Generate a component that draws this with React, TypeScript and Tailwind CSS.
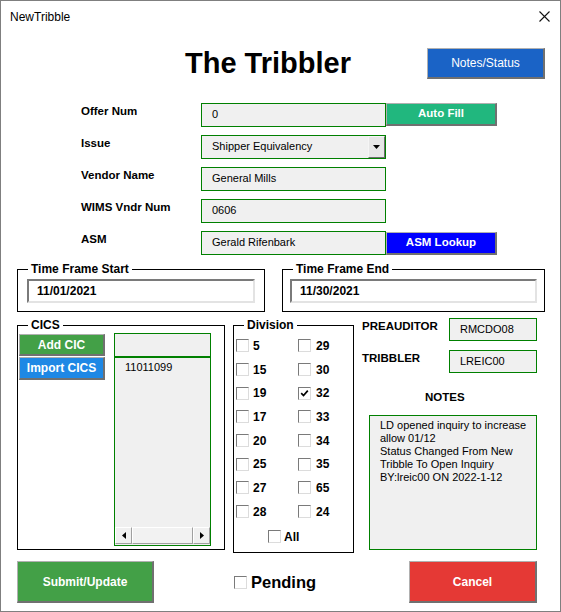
import React from "react";

const Box = ({ checked }: { checked?: boolean }) => (
  <span className="w-[13px] h-[13px] border border-t-[#7a7a7a] border-l-[#7a7a7a] border-r-[#dcdcdc] border-b-[#dcdcdc] bg-white flex items-center justify-center shrink-0">
    {checked && (
      <svg width="9" height="9" viewBox="0 0 9 9">
        <path d="M1.2 4.2 L3.5 6.6 L7.8 1.6" stroke="#000" strokeWidth="1.7" fill="none" />
      </svg>
    )}
  </span>
);

const GreenInput = ({ value, w = "w-[185px]", h = "h-[24px]" }: { value: string; w?: string; h?: string }) => (
  <div className={`${w} ${h} border border-[#008000] bg-[#f0f0f0] text-[11px] pl-[10px] pt-[3px] leading-[14px]`}>{value}</div>
);

const Row = ({ label, children }: { label: string; children: React.ReactNode }) => (
  <div className="flex h-[24px]">
    <div className="w-[120px] text-[11.5px] font-bold leading-[14px] pt-[1px]">{label}</div>
    {children}
  </div>
);

const btnBevel = "border border-[#b0b0b0] border-r-2 border-b-2 border-r-[#707070] border-b-[#707070]";

export default function App() {
  const left = ["5", "15", "19", "17", "20", "25", "27", "28"];
  const right = ["29", "30", "32", "33", "34", "35", "65", "24"];
  return (
    <div className="w-[561px] h-[612px] bg-white border border-[#7f7f7f] flex flex-col text-black font-['Liberation_Sans',Arial,sans-serif]">
      {/* title bar */}
      <div className="h-[31px] flex items-center justify-between pl-[9px] pr-[10px] shrink-0">
        <span className="text-[12px] leading-[14px]">NewTribble</span>
        <svg width="11" height="11" viewBox="0 0 11 11">
          <path d="M0.5 0.5 L10.5 10.5 M10.5 0.5 L0.5 10.5" stroke="#111" strokeWidth="1.1" />
        </svg>
      </div>

      {/* header */}
      <div className="h-[71px] flex items-start shrink-0">
        <div className="ml-[184px] mt-[15px] text-[29px] font-bold leading-[32px]">The Tribbler</div>
        <div className={`ml-auto mr-[15px] mt-[16px] w-[118px] h-[31px] bg-[#1a63c6] text-white text-[12px] flex items-center justify-center ${btnBevel}`}>
          Notes/Status
        </div>
      </div>

      {/* form rows */}
      <div className="pl-[80px] flex flex-col gap-[8px] shrink-0">
        <Row label="Offer Num">
          <GreenInput value="0" />
          <div className={`w-[111px] h-[23px] bg-[#21b77e] text-white text-[11.5px] font-bold flex items-center justify-center ${btnBevel}`}>Auto Fill</div>
        </Row>
        <Row label="Issue">
          <div className="w-[185px] h-[24px] border border-[#008000] bg-[#f0f0f0] flex">
            <div className="flex-1 text-[11px] pl-[10px] pt-[3px] leading-[14px]">Shipper Equivalency</div>
            <div className="w-[17px] h-[22px] bg-[#e6e6e6] border border-t-[#f5f5f5] border-l-[#f5f5f5] border-r-[#6b6b6b] border-b-[#6b6b6b] flex items-center justify-center">
              <svg width="7" height="4" viewBox="0 0 7 4"><path d="M0 0 H7 L3.5 4 Z" fill="#000" /></svg>
            </div>
          </div>
        </Row>
        <Row label="Vendor Name">
          <GreenInput value="General Mills" />
        </Row>
        <Row label="WIMS Vndr Num">
          <GreenInput value="0606" />
        </Row>
        <Row label="ASM">
          <GreenInput value="Gerald Rifenbark" />
          <div className={`w-[111px] h-[23px] mt-[1px] bg-[#0000ff] text-white text-[11.5px] font-bold flex items-center justify-center ${btnBevel}`}>ASM Lookup</div>
        </Row>
      </div>

      {/* time frames */}
      <div className="flex pl-[16px] mt-[7px] shrink-0">
        <fieldset className="w-[248px] h-[50px] border border-black px-[9px]">
          <legend className="ml-[1px] px-[3px] text-[12px] font-bold leading-[14px]">Time Frame Start</legend>
          <div className="mt-[3px] h-[24px] border-2 border-t-[#7a7a7a] border-l-[#7a7a7a] border-r-[#e3e3e3] border-b-[#e3e3e3] bg-white text-[12px] font-bold pl-[8px] leading-[20px]">11/01/2021</div>
        </fieldset>
        <fieldset className="ml-[17px] w-[263px] h-[50px] border border-black px-[7px]">
          <legend className="ml-[3px] px-[3px] text-[12px] font-bold leading-[14px]">Time Frame End</legend>
          <div className="mt-[3px] h-[24px] border-2 border-t-[#7a7a7a] border-l-[#7a7a7a] border-r-[#e3e3e3] border-b-[#e3e3e3] bg-white text-[12px] font-bold pl-[8px] leading-[20px]">11/30/2021</div>
        </fieldset>
      </div>

      {/* lower section */}
      <div className="flex pl-[16px] mt-[6px] shrink-0">
        <fieldset className="w-[208px] h-[232px] border border-black flex">
          <legend className="ml-[10px] px-[3px] text-[12px] font-bold leading-[14px]">CICS</legend>
          <div className="flex pl-[1px]">
            <div className="flex flex-col w-[86px] mt-[2px] gap-[1px]">
              <div className={`h-[22px] bg-[#43a047] text-white text-[12px] font-bold flex items-center justify-center ${btnBevel}`}>Add CIC</div>
              <div className={`h-[23px] bg-[#1e88e5] text-white text-[12px] font-bold flex items-center justify-center ${btnBevel}`}>Import CICS</div>
            </div>
            <div className="ml-[9px] mt-[1px] w-[97px] h-[213px] border border-[#008000] bg-[#f0f0f0] flex flex-col">
              <div className="h-[24px] border-b-2 border-[#008000] shrink-0" />
              <div className="flex-1 text-[11px] pl-[10px] pt-[2px] leading-[14px]">11011099</div>
              <div className="h-[17px] flex bg-[#f0f0f0] mb-[1px]">
                <div className="w-[17px] h-[17px] bg-[#f0f0f0] border border-t-[#fff] border-l-[#fff] border-r-[#a0a0a0] border-b-[#a0a0a0] flex items-center justify-center">
                  <svg width="4" height="7" viewBox="0 0 4 7"><path d="M4 0 V7 L0 3.5 Z" fill="#000" /></svg>
                </div>
                <div className="flex-1 border border-t-[#fff] border-l-[#fff] border-r-[#a0a0a0] border-b-[#a0a0a0] bg-[#f2f2f2]" />
                <div className="w-[17px] h-[17px] bg-[#f0f0f0] border border-t-[#fff] border-l-[#fff] border-r-[#a0a0a0] border-b-[#a0a0a0] flex items-center justify-center">
                  <svg width="4" height="7" viewBox="0 0 4 7"><path d="M0 0 V7 L4 3.5 Z" fill="#000" /></svg>
                </div>
              </div>
            </div>
          </div>
        </fieldset>

        <fieldset className="ml-[8px] w-[121px] h-[235px] border border-black">
          <legend className="ml-[10px] px-[3px] text-[12px] font-bold leading-[14px]">Division</legend>
          <div className="grid grid-cols-[62px_1fr] pl-[2px] mt-[2px]">
            {left.map((l, i) => (
              <React.Fragment key={l}>
                <div className="h-[23.7px] flex items-center">
                  <Box />
                  <span className="ml-[4px] text-[12px] font-bold">{l}</span>
                </div>
                <div className="h-[23.7px] flex items-center">
                  <Box checked={right[i] === "32"} />
                  <span className="ml-[5px] text-[12px] font-bold">{right[i]}</span>
                </div>
              </React.Fragment>
            ))}
          </div>
          <div className="h-[24px] mt-[1px] flex items-center pl-[34px]">
            <Box />
            <span className="ml-[3px] text-[12px] font-bold">All</span>
          </div>
        </fieldset>

        <div className="ml-[8px] flex flex-col">
          <div className="flex">
            <div className="w-[87px] text-[11.5px] font-bold leading-[14px] pt-[1px]">PREAUDITOR</div>
            <GreenInput value="RMCDO08" w="w-[88px]" h="h-[23px]" />
          </div>
          <div className="flex mt-[9px]">
            <div className="w-[87px] text-[11.5px] font-bold leading-[14px] pt-[1px]">TRIBBLER</div>
            <GreenInput value="LREIC00" w="w-[88px]" h="h-[23px]" />
          </div>
          <div className="ml-[63px] mt-[17px] text-[11.5px] font-bold leading-[14px]">NOTES</div>
          <div className="ml-[7px] mt-[11px] w-[168px] h-[135px] border border-[#008000] bg-[#f0f0f0] text-[11px] leading-[13px] pl-[10px] pt-[3px]">
            <div>LD opened inquiry to increase</div>
            <div>allow 01/12</div>
            <div>Status Changed From New</div>
            <div>Tribble To Open Inquiry</div>
            <div>BY:lreic00 ON 2022-1-12</div>
          </div>
        </div>
      </div>

      {/* footer */}
      <div className="flex items-start pl-[16px] mt-[8px] shrink-0">
        <div className={`w-[137px] h-[42px] bg-[#43a047] text-white text-[12px] font-bold flex items-center justify-center ${btnBevel}`}>Submit/Update</div>
        <div className="ml-[80px] mt-[12px] flex items-center">
          <Box />
          <span className="ml-[4px] text-[16.5px] font-bold leading-[18px]">Pending</span>
        </div>
        <div className={`ml-auto mr-[23px] w-[128px] h-[42px] bg-[#e53935] text-white text-[12px] font-bold flex items-center justify-center ${btnBevel}`}>Cancel</div>
      </div>
    </div>
  );
}
